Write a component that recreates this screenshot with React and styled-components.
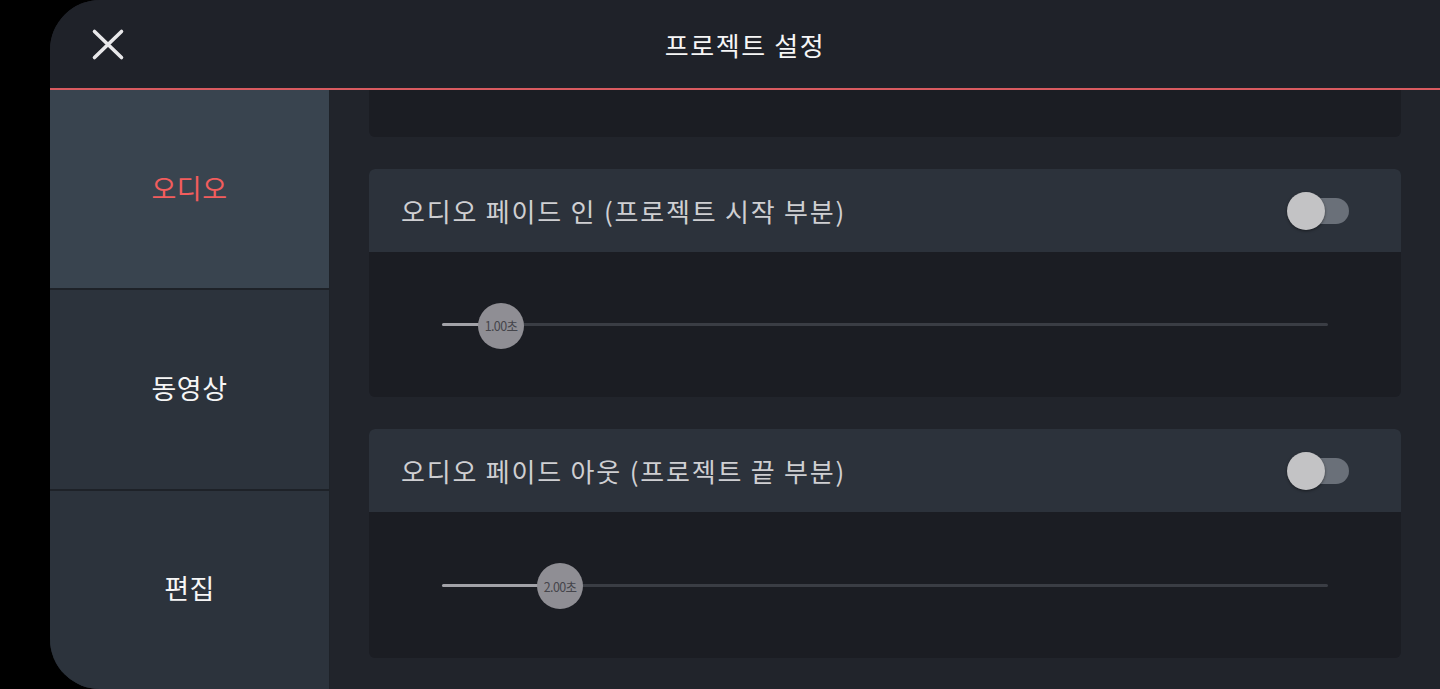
import React from 'react';
import styled, { createGlobalStyle } from 'styled-components';

const GlobalStyle = createGlobalStyle`
  html, body {
    margin: 0;
    padding: 0;
    background: #000000;
    font-family: "Noto Sans CJK KR", "Noto Sans", sans-serif;
  }
`;

const Screen = styled.div`
  height: 689px;
  padding-left: 50px;
  background: #000000;
  overflow: hidden;
`;

const Panel = styled.div`
  height: 100%;
  display: flex;
  flex-direction: column;
  background: #21242b;
  border-radius: 50px 0 0 50px;
  overflow: hidden;
`;

const Header = styled.header`
  height: 88px;
  flex-shrink: 0;
  display: grid;
  grid-template-columns: 1fr auto 1fr;
  align-items: center;
  background: #1f2229;
  border-bottom: 2px solid #d95b60;
`;

const CloseButton = styled.button`
  justify-self: start;
  margin-left: 41px;
  padding: 0;
  width: 34px;
  height: 34px;
  border: none;
  background: none;
  display: flex;
  align-items: center;
  justify-content: center;
  cursor: pointer;
`;

const Title = styled.h1`
  margin: 0;
  font-size: 26px;
  font-weight: 400;
  color: #f6f6f6;
  letter-spacing: 1.6px;
`;

const Body = styled.div`
  flex: 1;
  display: flex;
  min-height: 0;
`;

const Sidebar = styled.nav`
  width: 280px;
  flex-shrink: 0;
  display: flex;
  flex-direction: column;
  gap: 2px;
  background: #1e2228;
`;

const SideItem = styled.div`
  flex: 1;
  display: flex;
  align-items: center;
  justify-content: center;
  margin-right: 1px;
  background: ${p => (p.$active ? '#39444f' : '#2c333c')};
  color: ${p => (p.$active ? '#f25d5d' : '#f6f6f6')};
  font-size: 27px;
  font-weight: 400;
  letter-spacing: 0.5px;
  padding-bottom: 4px;
`;

const Content = styled.main`
  flex: 1;
  display: flex;
  flex-direction: column;
  gap: 32px;
  padding: 0 39px;
  background: #21242b;
  overflow: hidden;
`;

const CardTail = styled.div`
  height: 47px;
  flex-shrink: 0;
  background: #1b1d23;
  border-radius: 0 0 6px 6px;
`;

const Card = styled.section`
  flex-shrink: 0;
  border-radius: 6px;
  overflow: hidden;
  background: #1b1d23;
`;

const CardHeader = styled.div`
  height: 83px;
  display: flex;
  align-items: center;
  justify-content: space-between;
  padding: 0 52px 0 32px;
  background: #2c323b;
`;

const CardTitle = styled.span`
  font-size: 26px;
  color: #cfcfd2;
  letter-spacing: 1.8px;
`;

const ToggleTrack = styled.div`
  position: relative;
  width: 50px;
  height: 26px;
  border-radius: 13px;
  background: #6a7079;
`;

const ToggleKnob = styled.div`
  position: absolute;
  left: -12px;
  top: -6px;
  width: 38px;
  height: 38px;
  border-radius: 50%;
  background: #c3c3c5;
  box-shadow: 0 1px 3px rgba(0, 0, 0, 0.45);
`;

const CardBody = styled.div`
  height: ${p => p.$h}px;
  display: flex;
  align-items: center;
  padding: 0 73px;
`;

const Track = styled.div`
  position: relative;
  flex: 1;
  height: 3px;
  background: #3a3d44;
  border-radius: 2px;
`;

const Fill = styled.div`
  height: 100%;
  background: #a2a2a8;
  border-radius: 2px;
`;

const Thumb = styled.div`
  position: absolute;
  top: 50%;
  width: 46px;
  height: 46px;
  margin-left: -23px;
  margin-top: -22px;
  border-radius: 50%;
  background: #8f8e94;
  display: flex;
  align-items: center;
  justify-content: center;
  font-size: 12.5px;
  color: #45454b;
  letter-spacing: -0.6px;
`;

const MAX = 15;

function Toggle() {
  return (
    <ToggleTrack>
      <ToggleKnob />
    </ToggleTrack>
  );
}

function Slider({ value }) {
  const pct = (value / MAX) * 100;
  return (
    <Track>
      <Fill style={{ width: `${pct}%` }} />
      <Thumb style={{ left: `${pct}%` }}>{value.toFixed(2)}초</Thumb>
    </Track>
  );
}

function FadeCard({ title, value, bodyHeight }) {
  return (
    <Card>
      <CardHeader>
        <CardTitle>{title}</CardTitle>
        <Toggle />
      </CardHeader>
      <CardBody $h={bodyHeight}>
        <Slider value={value} />
      </CardBody>
    </Card>
  );
}

export default function App() {
  return (
    <>
      <GlobalStyle />
      <Screen>
        <Panel>
          <Header>
            <CloseButton aria-label="닫기">
              <svg width="34" height="34" viewBox="0 0 34 34">
                <path d="M3.5 4.5 L30.5 30.5 M30.5 4.5 L3.5 30.5" stroke="#e8e8ea" strokeWidth="3.6" strokeLinecap="round" fill="none" />
              </svg>
            </CloseButton>
            <Title>프로젝트 설정</Title>
            <div />
          </Header>
          <Body>
            <Sidebar>
              <SideItem $active>오디오</SideItem>
              <SideItem>동영상</SideItem>
              <SideItem>편집</SideItem>
            </Sidebar>
            <Content>
              <CardTail />
              <FadeCard title="오디오 페이드 인 (프로젝트 시작 부분)" value={1} bodyHeight={145} />
              <FadeCard title="오디오 페이드 아웃 (프로젝트 끝 부분)" value={2} bodyHeight={146} />
            </Content>
          </Body>
        </Panel>
      </Screen>
    </>
  );
}
